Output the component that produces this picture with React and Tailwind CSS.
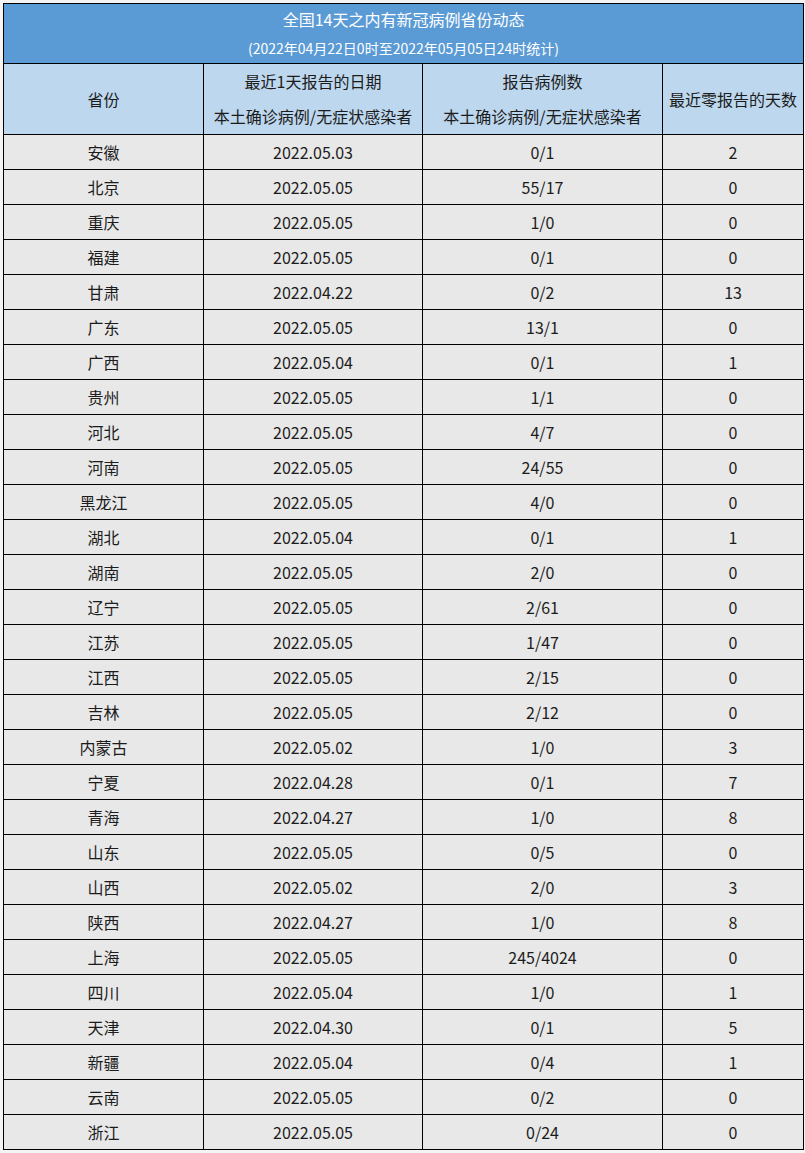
const rows = [
  ['安徽', '2022.05.03', '0/1', '2'],
  ['北京', '2022.05.05', '55/17', '0'],
  ['重庆', '2022.05.05', '1/0', '0'],
  ['福建', '2022.05.05', '0/1', '0'],
  ['甘肃', '2022.04.22', '0/2', '13'],
  ['广东', '2022.05.05', '13/1', '0'],
  ['广西', '2022.05.04', '0/1', '1'],
  ['贵州', '2022.05.05', '1/1', '0'],
  ['河北', '2022.05.05', '4/7', '0'],
  ['河南', '2022.05.05', '24/55', '0'],
  ['黑龙江', '2022.05.05', '4/0', '0'],
  ['湖北', '2022.05.04', '0/1', '1'],
  ['湖南', '2022.05.05', '2/0', '0'],
  ['辽宁', '2022.05.05', '2/61', '0'],
  ['江苏', '2022.05.05', '1/47', '0'],
  ['江西', '2022.05.05', '2/15', '0'],
  ['吉林', '2022.05.05', '2/12', '0'],
  ['内蒙古', '2022.05.02', '1/0', '3'],
  ['宁夏', '2022.04.28', '0/1', '7'],
  ['青海', '2022.04.27', '1/0', '8'],
  ['山东', '2022.05.05', '0/5', '0'],
  ['山西', '2022.05.02', '2/0', '3'],
  ['陕西', '2022.04.27', '1/0', '8'],
  ['上海', '2022.05.05', '245/4024', '0'],
  ['四川', '2022.05.04', '1/0', '1'],
  ['天津', '2022.04.30', '0/1', '5'],
  ['新疆', '2022.05.04', '0/4', '1'],
  ['云南', '2022.05.05', '0/2', '0'],
  ['浙江', '2022.05.05', '0/24', '0'],
];

export default function App() {
  return (
    <div className="min-h-[1153px] bg-[#f4f4f4] p-[3px] font-['Noto_Sans_CJK_SC','Microsoft_YaHei',sans-serif] text-[#1c1c1c]">
      <table className="w-[800px] table-fixed border-collapse text-center text-[16px]">
        <colgroup>
          <col className="w-[200px]" />
          <col className="w-[219px]" />
          <col className="w-[240px]" />
          <col className="w-[141px]" />
        </colgroup>
        <thead>
          <tr>
            <th
              colSpan={4}
              className="h-[60px] border border-black bg-[#5b9bd5] p-0 font-normal text-white"
            >
              <div className="flex flex-col items-center">
                <span className="text-[16px] leading-[28px]">全国14天之内有新冠病例省份动态</span>
                <span className="text-[14px] leading-[30px]">
                  (2022年04月22日0时至2022年05月05日24时统计)
                </span>
              </div>
            </th>
          </tr>
          <tr className="bg-[#bdd7ee]">
            <th className="h-[71px] border border-black p-0 font-normal">省份</th>
            <th className="border border-black p-0 font-normal leading-[35px]">
              <div>最近1天报告的日期</div>
              <div>本土确诊病例/无症状感染者</div>
            </th>
            <th className="border border-black p-0 font-normal leading-[35px]">
              <div>报告病例数</div>
              <div>本土确诊病例/无症状感染者</div>
            </th>
            <th className="border border-black p-0 font-normal">最近零报告的天数</th>
          </tr>
        </thead>
        <tbody>
          {rows.map((r) => (
            <tr key={r[0]} className="bg-[#e8e8e8]">
              {r.map((c, i) => (
                <td key={i} className="h-[35px] border border-black p-0">
                  {c}
                </td>
              ))}
            </tr>
          ))}
        </tbody>
      </table>
    </div>
  );
}
